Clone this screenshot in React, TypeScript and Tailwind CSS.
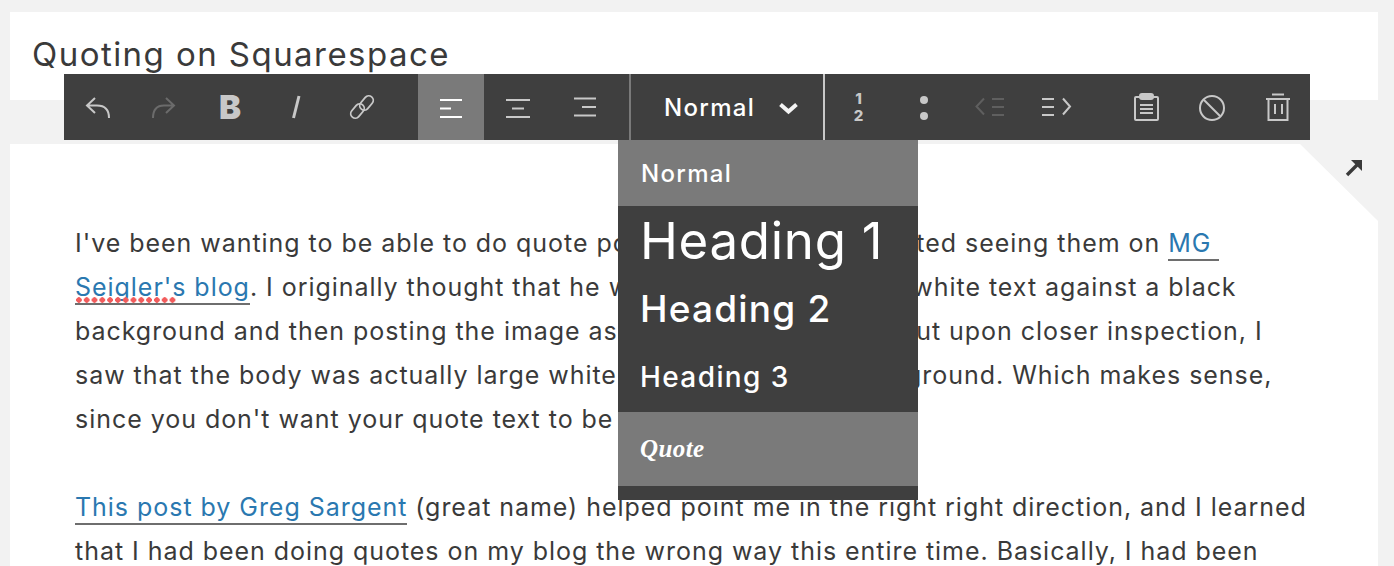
import type { ReactNode } from "react";

const sans = "font-['Inter','Liberation_Sans',sans-serif]";

// every toolbar icon sits in a 66px square cell
function Cell({ active, children }: { active?: boolean; children: ReactNode }) {
  return (
    <div className={`w-[66px] h-[66px] flex-shrink-0 flex items-center justify-center ${active ? "bg-[#7a7a7a]" : ""}`}>
      {children}
    </div>
  );
}

function Icon({ color = "#c8c8c8", width = 2, children }: { color?: string; width?: number; children: ReactNode }) {
  return (
    <svg width="66" height="66" viewBox="0 0 66 66" fill="none" stroke={color} strokeWidth={width}>
      {children}
    </svg>
  );
}

function Toolbar() {
  return (
    <div className="absolute left-[64px] top-[74px] w-[1246px] h-[66px] bg-[#3f3f3f] flex pl-px z-10">
      <Cell>
        <Icon>
          <path d="M30 24 L22 31.5 L30 39 M22 31.5 H32 C40 31.5 44 36 44 44" />
        </Icon>
      </Cell>
      <Cell>
        <Icon color="#6b6b6b">
          <path d="M35 24 L43 31.5 L35 39 M43 31.5 H33 C26 31.5 22 36 22 44" />
        </Icon>
      </Cell>
      <Cell>
        <span className={`${sans} text-[33px] leading-none font-black text-[#c8c8c8]`}>B</span>
      </Cell>
      <Cell>
        <Icon width={3}>
          <path d="M36 22 L30.5 44" />
        </Icon>
      </Cell>
      <Cell>
        <Icon width={1.8}>
          <rect x="24" y="29" width="9" height="16" rx="4.5" transform="rotate(40 28.5 37)" />
          <rect x="33" y="21" width="9" height="16" rx="4.5" transform="rotate(40 37.5 29)" />
        </Icon>
      </Cell>

      <div className="w-[23px] flex-shrink-0" />

      <Cell active>
        <Icon color="#ffffff">
          <path d="M22 26 H44 M22 34.5 H33 M22 43 H44" />
        </Icon>
      </Cell>
      <Cell>
        <Icon>
          <path d="M22 26 H46 M28 34.5 H40 M22 43 H46" />
        </Icon>
      </Cell>
      <Cell>
        <Icon>
          <path d="M24 24.5 H46 M32 33 H46 M24 41.5 H46" />
        </Icon>
      </Cell>

      <div className="ml-[13px] w-[2px] bg-[#7a7a7a] flex-shrink-0" />
      <div className="w-[192px] flex-shrink-0 flex items-center pl-[33px] pt-[2px]">
        <span className={`${sans} text-[24px] font-medium tracking-[1.3px] text-white`}>Normal</span>
        <svg className="ml-[24px]" width="19" height="13" viewBox="0 0 19 13" fill="none" stroke="#f4f4f4" strokeWidth="4">
          <path d="M1.5 2.5 L9.5 9.5 L17.5 2.5" />
        </svg>
      </div>
      <div className="w-[2px] bg-[#c8c8c8] flex-shrink-0" />

      <Cell>
        <div className={`${sans} flex flex-col items-center text-[15px] leading-[17px] font-extrabold text-[#c8c8c8] ml-[1px]`}>
          <span>1</span>
          <span>2</span>
        </div>
      </Cell>
      <Cell>
        <Icon color="none">
          <circle cx="33" cy="26" r="4" fill="#c8c8c8" />
          <circle cx="33" cy="42" r="4" fill="#c8c8c8" />
        </Icon>
      </Cell>
      <Cell>
        <Icon color="#5f5f5f">
          <path d="M27 24.5 L19.5 32.5 L27 40.5 M35 25 H47 M35 33 H47 M35 41 H47" />
        </Icon>
      </Cell>
      <Cell>
        <Icon>
          <path d="M19 25 H31 M19 33 H31 M19 41 H31 M40 24.5 L47 32.5 L40 40.5" />
        </Icon>
      </Cell>

      <div className="w-[24px] flex-shrink-0" />

      <Cell>
        <Icon>
          <rect x="22" y="23" width="23" height="23" rx="1" />
          <rect x="27" y="20" width="13" height="5" rx="2" fill="#c8c8c8" />
          <path d="M27 31 H40 M27 35 H40 M27 39 H40" />
        </Icon>
      </Cell>
      <Cell>
        <Icon>
          <circle cx="33" cy="34" r="12" />
          <path d="M25 26 L41 42" />
        </Icon>
      </Cell>
      <Cell>
        <Icon>
          <path d="M21 25 H45 M27 20.5 H39 M30 30 V40 M37 30 V40" />
          <rect x="23.5" y="25" width="19" height="21" />
        </Icon>
      </Cell>
    </div>
  );
}

function StyleMenu() {
  return (
    <div className={`${sans} absolute left-[618px] top-[140px] w-[300px] h-[360px] bg-[#3f3f3f] text-white z-10`}>
      <div className="h-[66px] bg-[#7a7a7a] flex items-center pl-[23px] pt-[2px] text-[24px] font-medium tracking-[1.3px]">Normal</div>
      <div className="h-[70px] flex items-center pl-[22px] text-[51px] font-normal tracking-[0.7px]">Heading 1</div>
      <div className="h-[66px] flex items-center pl-[22px] text-[37px] font-medium tracking-[1.2px]">Heading 2</div>
      <div className="h-[70px] flex items-center pl-[22px] text-[28px] font-medium tracking-[1.4px]">Heading 3</div>
      <div className="h-[74px] bg-[#7a7a7a] flex items-center pl-[22px] font-['Liberation_Serif',serif] italic font-bold text-[25px] tracking-[0.4px]">
        Quote
      </div>
    </div>
  );
}

function Link({ children }: { children: ReactNode }) {
  return <span className="text-[#2a78b0] border-b-2 border-[#6e6e6e] pb-[1px]">{children}</span>;
}

export default function App() {
  return (
    <div className={`${sans} relative h-[566px] overflow-hidden bg-[#f2f2f2] pt-3 pl-[10px] pr-4 text-[#3a3a3a]`}>
      <div className="h-[88px] bg-white pl-[22px] pt-[19px]">
        <h1 className="text-[33px] leading-[46px] font-normal tracking-[1.45px]">Quoting on Squarespace</h1>
      </div>

      <div className="mt-[44px] bg-white pl-[65px] pt-[77px] h-[500px] text-[25px] leading-[44px] tracking-[0.96px] [clip-path:polygon(0_0,1290px_0,1368px_77px,1368px_100%,0_100%)]">
        <p className="whitespace-nowrap">
          I've been wanting to be able to do quote posts ever since I've started seeing them on <Link>MG&nbsp;</Link>
          <br />
          <span className="relative">
            <Link>Seigler's blog</Link>
            <span className="absolute left-0 top-[25px] w-[102px] h-[6px] bg-[radial-gradient(circle,#f25c5c_2.5px,transparent_3px)] bg-[length:7.8px_6px]" />
          </span>
          . I originally thought that he was creating images of white text against a black
          <br />
          background and then posting the image as the whole post body, but upon closer inspection, I
          <br />
          saw that the body was actually large white text on the black background. Which makes sense,
          <br />
          since you don't want your quote text to be an image.
        </p>
        <p className="mt-[44px] whitespace-nowrap">
          <Link>This post by Greg Sargent</Link> (great name) helped point me in the right right direction, and I learned
          <br />
          that I had been doing quotes on my blog the wrong way this entire time. Basically, I had been
        </p>
      </div>

      <svg className="absolute left-[1345px] top-[158px]" width="18" height="19" viewBox="0 0 18 19" fill="none" stroke="#3a3a3a" strokeWidth="3.4">
        <path d="M2 17 L13 6" />
        <path d="M6 2 H17 V13 Z" fill="#3a3a3a" stroke="none" />
      </svg>

      <Toolbar />
      <StyleMenu />
    </div>
  );
}
